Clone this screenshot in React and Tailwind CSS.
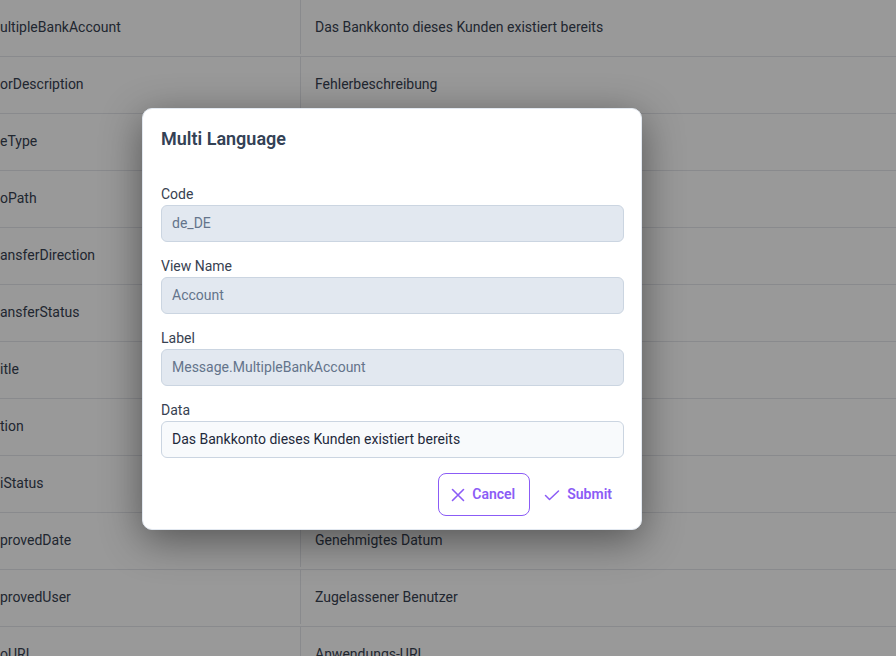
import React from "react";

const rows = [
  ["ultipleBankAccount", "Das Bankkonto dieses Kunden existiert bereits"],
  ["orDescription", "Fehlerbeschreibung"],
  ["eType", "Servicetyp"],
  ["oPath", "Logo-Pfad"],
  ["ansferDirection", "Richtung"],
  ["ansferStatus", "Status"],
  ["itle", "Titel"],
  ["tion", "Aktion"],
  ["iStatus", "API-Status"],
  ["provedDate", "Genehmigtes Datum"],
  ["provedUser", "Zugelassener Benutzer"],
  ["oURL", "Anwendungs-URL"],
];

function Field({ label, value, disabled }) {
  return (
    <div className="flex flex-col">
      <label className="h-5 text-[14px] leading-5 text-[#374151]">{label}</label>
      <div
        className={
          "mt-px flex h-[37px] items-center rounded-md border px-[10px] text-[14px] " +
          (disabled
            ? "border-[#cbd5e1] bg-[#e2e8f0] text-[#64748b]"
            : "border-[#cbd5e1] bg-[#f8fafc] text-[#1e293b]")
        }
      >
        {value}
      </div>
    </div>
  );
}

export default function App() {
  return (
    <div
      className="relative h-[656px] w-[896px] overflow-hidden bg-white"
      style={{ fontFamily: "Roboto, 'Liberation Sans', sans-serif" }}
    >
      {/* translations table */}
      <div className="flex flex-col">
        {rows.map(([key, text]) => (
          <div key={key} className="flex h-[57px] shrink-0 border-b border-[#e5e7eb] pb-[2px] text-[14px] text-[#374151]">
            <div className="flex w-[301px] items-center border-r border-[#e5e7eb]">{key}</div>
            <div className="flex flex-1 items-center pl-[14px]">{text}</div>
          </div>
        ))}
      </div>

      {/* dim backdrop + dialog */}
      <div className="absolute inset-0 bg-black/40">
        <div className="absolute left-[142px] top-[108px] flex w-[500px] flex-col rounded-[10px] border border-[#e2e8f0] bg-white pb-[13px] pl-[18px] pr-[17px] pt-[18px] shadow-[0_10px_40px_rgba(0,0,0,0.45)]">
          <h2 className="h-6 text-[18px] font-semibold leading-6 text-[#334155]">Multi Language</h2>
          <div className="mt-[33px] flex flex-col gap-[14px]">
            <Field label="Code" value="de_DE" disabled />
            <Field label="View Name" value="Account" disabled />
            <Field label="Label" value="Message.MultipleBankAccount" disabled />
            <Field label="Data" value="Das Bankkonto dieses Kunden existiert bereits" />
          </div>
          <div className="mt-[15px] flex justify-end gap-[3px]">
            <button className="flex h-[43px] items-center gap-[6px] rounded-lg border border-[#8b5cf6] pl-[11px] pr-[14px] text-[14px] font-semibold text-[#8b5cf6]">
              <svg width="16" height="16" viewBox="0 0 16 16" fill="none" stroke="currentColor" strokeWidth="1.6" strokeLinecap="round">
                <path d="M2.5 2.5l11 11M13.5 2.5l-11 11" />
              </svg>
              Cancel
            </button>
            <button className="flex h-[43px] items-center gap-[7px] rounded-lg pl-[11px] pr-3 text-[14px] font-semibold text-[#8b5cf6]">
              <svg width="16" height="16" viewBox="0 0 16 16" fill="none" stroke="currentColor" strokeWidth="1.5" strokeLinecap="round" strokeLinejoin="round">
                <path d="M1.5 8.5l4 4L14.5 4" />
              </svg>
              Submit
            </button>
          </div>
        </div>
      </div>
    </div>
  );
}
